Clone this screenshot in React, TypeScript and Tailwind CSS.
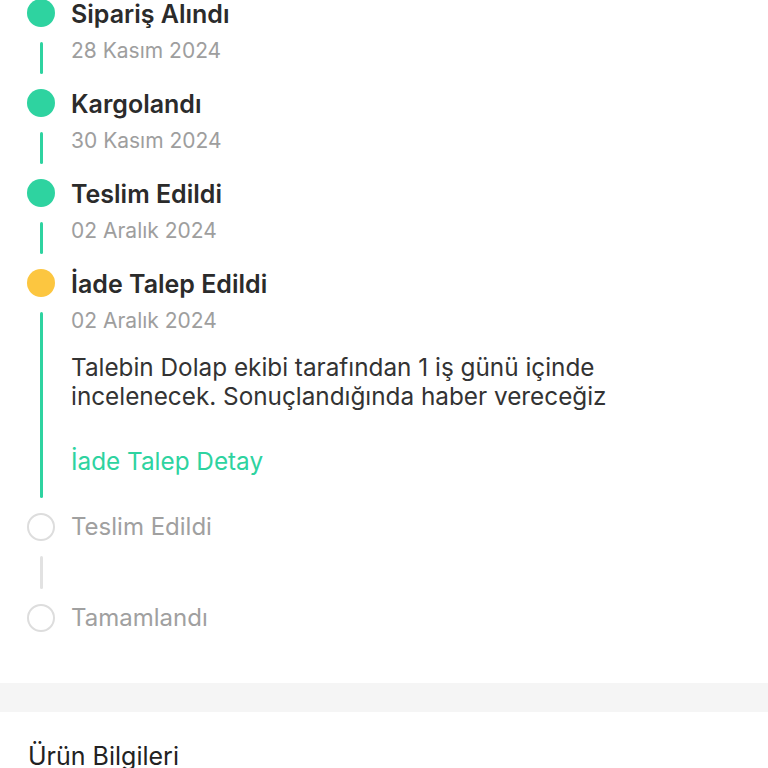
import React from "react";

type Step = {
    title: string;
    date?: string;
    state: "done" | "active" | "todo";
    lineState?: "done" | "todo";
    body?: React.ReactNode;
};

const steps: Step[] = [
    { title: "Sipariş Alındı", date: "28 Kasım 2024", state: "done", lineState: "done" },
    { title: "Kargolandı", date: "30 Kasım 2024", state: "done", lineState: "done" },
    { title: "Teslim Edildi", date: "02 Aralık 2024", state: "done", lineState: "done" },
    {
        title: "İade Talep Edildi",
        date: "02 Aralık 2024",
        state: "active",
        lineState: "done",
        body: (
            <>
                <p className="mt-[18px] whitespace-nowrap text-[24.3px] leading-[29px] text-[#333333]">
                    Talebin Dolap ekibi tarafından 1 iş günü içinde
                    <br />
                    incelenecek. Sonuçlandığında haber vereceğiz
                </p>
                <a className="mt-[36px] block text-[24.3px] leading-[29px] text-[#2ed3a0]">İade Talep Detay</a>
            </>
        ),
    },
    { title: "Teslim Edildi", state: "todo", lineState: "todo" },
    { title: "Tamamlandı", state: "todo" },
];

function Dot({ state }: { state: Step["state"] }) {
    if (state === "done") return <div className="h-[28px] w-[28px] shrink-0 rounded-full bg-[#2ed3a0]" />;
    if (state === "active") return <div className="h-[28px] w-[28px] shrink-0 rounded-full bg-[#fcc640]" />;
    return <div className="h-[28px] w-[28px] shrink-0 rounded-full border-[2px] border-[#dddddd] bg-white" />;
}

export default function App() {
    return (
        <div className="min-h-screen bg-white" style={{ fontFamily: "Inter, 'Open Sans', sans-serif" }}>
            <div className="-mt-px pl-[27px]">
                {steps.map((s, i) => (
                    <div key={i} className="flex gap-4">
                        <div className="flex w-[28px] flex-col items-center">
                            <Dot state={s.state} />
                            {s.lineState && (
                                <div
                                    className={`my-[15px] w-[3px] flex-1 rounded-full ${s.lineState === "done" ? "bg-[#2ed3a0]" : "bg-[#e2e2e2]"}`}
                                />
                            )}
                        </div>
                        <div className={`flex-1 ${s.lineState ? (s.state === "todo" ? "pb-[63px]" : "pb-[24px]") : ""}`}>
                            <div
                                className={`flex h-[28px] items-center whitespace-nowrap ${s.state === "todo" ? "text-[24px] font-normal text-[#a0a0a0]" : "pt-[3px] text-[25px] font-semibold text-[#2b2b2b]"}`}
                            >
                                {s.title}
                            </div>
                            {s.date && (
                                <div className="mt-[10px] h-[28px] whitespace-nowrap text-[21px] leading-[28px] text-[#9e9e9e]">{s.date}</div>
                            )}
                            {s.body}
                            {s.body && <div className="h-[13px]" />}
                        </div>
                    </div>
                ))}
            </div>
            <div className="mt-[51px] h-[29px] bg-[#f5f5f5]" />
            <div className="px-[28px] pt-[30px] text-[25px] leading-[28px] text-[#222222]">Ürün Bilgileri</div>
        </div>
    );
}
